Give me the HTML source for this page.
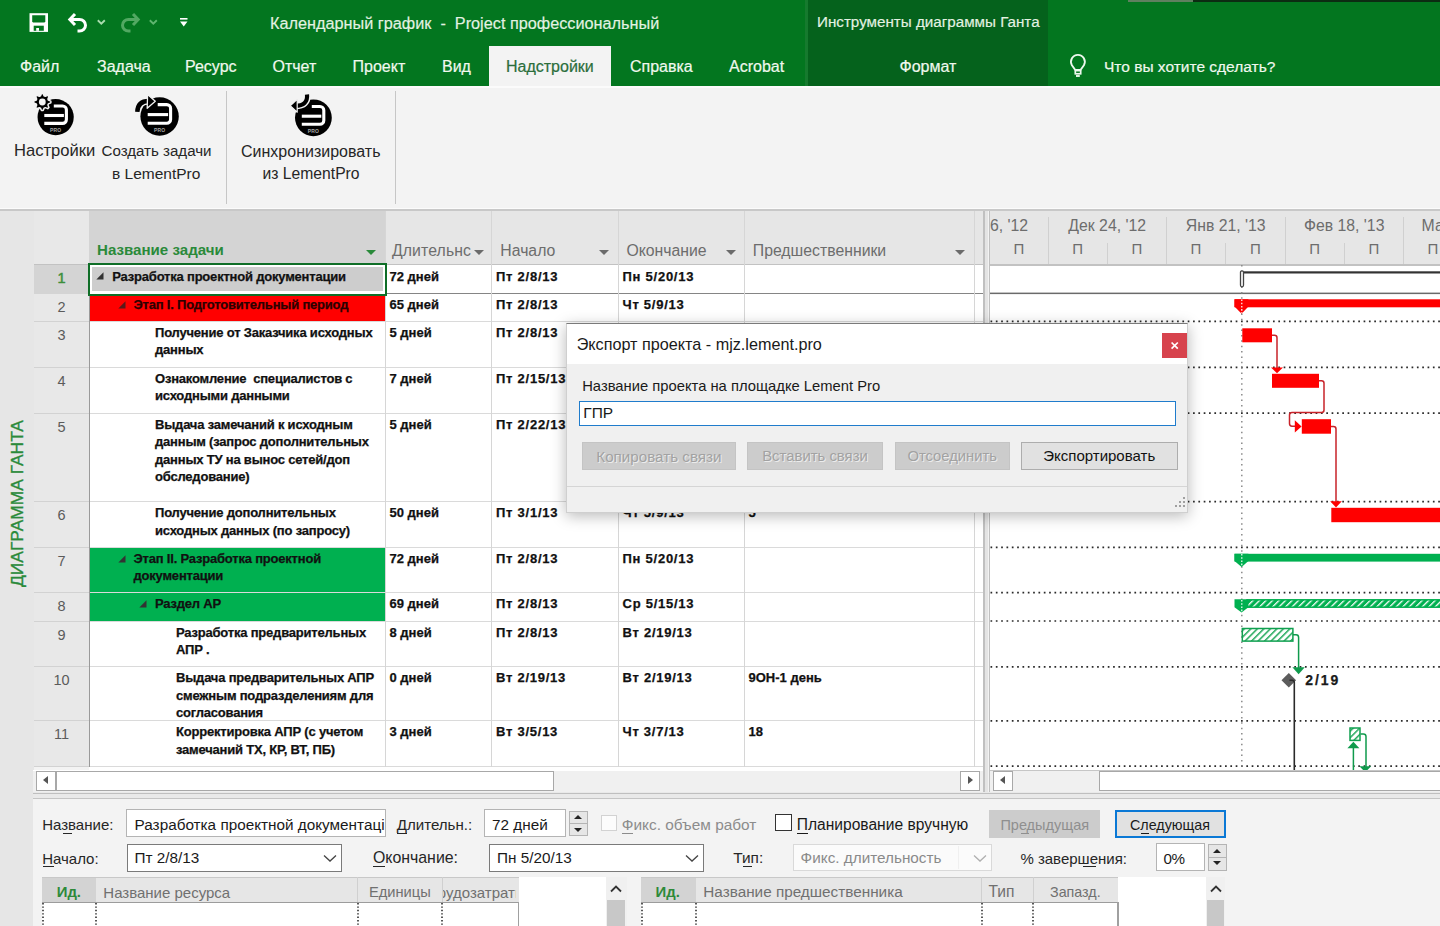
<!DOCTYPE html>
<html><head><meta charset="utf-8">
<style>
*{box-sizing:border-box;margin:0;padding:0}
html,body{width:1440px;height:926px;overflow:hidden;background:#f3f3f3;font-family:"Liberation Sans",sans-serif}
.a{position:absolute}
.t{position:absolute;line-height:1;white-space:nowrap}
/* title */
#title{left:0;top:0;width:1440px;height:85.6px;background:#03761f}
#ctx{left:807.8px;top:0;width:240px;height:85.6px;background:#05621c}
.tab{font-size:16px;color:#f0f8ee;-webkit-text-stroke:0.2px currentColor}

.nm{font-size:13px;font-weight:bold;color:#111;-webkit-text-stroke:0.25px currentColor;letter-spacing:-0.2px;line-height:17.5px;white-space:nowrap}
.du{font-size:13px;font-weight:bold;color:#111;-webkit-text-stroke:0.25px currentColor;line-height:17.5px;white-space:nowrap}
.dt{font-size:13px;font-weight:bold;color:#111;-webkit-text-stroke:0.25px currentColor;letter-spacing:0.75px;line-height:17.5px;white-space:nowrap}
.rn{font-size:14.5px;color:#5b5b5b;line-height:1;white-space:nowrap;text-align:center;width:55px}
.hd{font-size:15.8px;color:#6d6d6d;line-height:1;white-space:nowrap}
.tri{position:absolute;width:0;height:0;border-style:solid}
</style></head><body>
<!-- ===== TITLE BAR ===== -->
<div id="title" class="a"></div>
<div id="ctx" class="a"></div>
<div class="a" style="left:805px;top:0;width:2.8px;height:85.6px;background:#167a2e"></div>
<div class="a" style="left:1127.5px;top:0;width:65px;height:1.6px;background:#5f805f"></div>
<div class="a" style="left:1192.5px;top:0;width:248px;height:1.6px;background:#0c2c12"></div>
<svg class="a" style="left:0;top:0" width="200" height="40" viewBox="0 0 200 40">
 <rect x="29.5" y="13.2" width="18.5" height="18.7" fill="#fff"/>
 <path d="M32.2 15.3H45.3V21.6L44.5 22.4H33L32.2 21.6Z" fill="#03761f"/>
 <rect x="33.7" y="25.7" width="10.1" height="5.1" fill="#03761f"/>
 <rect x="36.2" y="28" width="2.8" height="2.8" fill="#fff"/>
 <g fill="none" stroke="#fff" stroke-width="3" stroke-linejoin="miter">
  <path d="M70.5 19.5H79.5A6 5.8 0 0 1 79.5 31.1H77.5"/>
  <path d="M75 14L69.8 19.5L75 25"/>
 </g>
 <path d="M97.8 20.2L101.3 23.6L104.8 20.2" fill="none" stroke="#a9dcae" stroke-width="1.9"/>
 <g fill="none" stroke="#52a862" stroke-width="3" stroke-linejoin="miter">
  <path d="M137.5 19.5H128.5A6 5.8 0 0 0 128.5 31.1H130.5"/>
  <path d="M133 14L138.2 19.5L133 25"/>
 </g>
 <path d="M149.8 20.2L153.3 23.6L156.8 20.2" fill="none" stroke="#5fb56f" stroke-width="1.9"/>
 <rect x="180" y="18" width="7.5" height="1.6" fill="#fff"/>
 <path d="M180 21.5H187.5L183.75 26.5Z" fill="#fff"/>
</svg>
<div class="t" style="left:270px;top:14.7px;font-size:16.25px;color:#e4f2e2;-webkit-text-stroke:0.15px currentColor">Календарный график&nbsp;&nbsp;-&nbsp;&nbsp;Project профессиональный</div>
<div class="t" style="left:817px;top:14.2px;font-size:15.2px;color:#e4f2e2;-webkit-text-stroke:0.15px currentColor">Инструменты диаграммы Ганта</div>
<div class="t tab" style="left:20px;top:58.7px">Файл</div>
<div class="t tab" style="left:97px;top:58.7px">Задача</div>
<div class="t tab" style="left:185px;top:58.7px">Ресурс</div>
<div class="t tab" style="left:272.5px;top:58.7px">Отчет</div>
<div class="t tab" style="left:352.5px;top:58.7px">Проект</div>
<div class="t tab" style="left:442px;top:58.7px">Вид</div>
<div class="a" style="left:489px;top:45.5px;width:122px;height:41px;background:#f3f3f3"></div>
<div class="t tab" style="left:506px;top:59px;color:#2b6e3b">Надстройки</div>
<div class="t tab" style="left:630px;top:58.7px">Справка</div>
<div class="t tab" style="left:729px;top:58.7px">Acrobat</div>
<div class="t tab" style="left:899.5px;top:58.7px">Формат</div>
<svg class="a" style="left:1060px;top:48px" width="40" height="36" viewBox="0 0 40 36">
 <path d="M15.3 22L11.9 17.2A6.9 6.9 0 1 1 23.9 17.2L20.5 22Z" fill="none" stroke="#eef8ee" stroke-width="1.9" stroke-linejoin="round"/>
 <rect x="15.3" y="22.6" width="5.4" height="3.2" fill="none" stroke="#eef8ee" stroke-width="1.7"/>
 <rect x="16" y="27" width="3.8" height="2" fill="#e0f0e0"/>
</svg>
<div class="t tab" style="left:1104px;top:58.7px;font-size:15.5px">Что вы хотите сделать?</div>

<!-- ===== RIBBON ===== -->
<div class="a" style="left:0;top:85.6px;width:1440px;height:124px;background:#f3f3f3"></div>
<div class="a" style="left:0;top:86px;width:1440px;height:2px;background:#fbfbfb"></div>
<svg class="a" style="left:30px;top:90px" width="50" height="50" viewBox="0 0 50 50">
 <circle cx="25.65" cy="27.1" r="18.1" fill="#000"/>
 <g fill="none" stroke="#fff" stroke-width="3.1">
  <path d="M23.8 15.95H32.60A3.8 3.8 0 0 1 36.4 19.75V29.60A3.8 3.8 0 0 1 32.60 33.4H14.3"/>
  <path d="M14.3 25.5H33.90"/>
 </g>
 <text x="25.65" y="42.00" text-anchor="middle" font-family="Liberation Sans" font-weight="bold" font-size="5" letter-spacing="0.2" fill="#a8a8a8">PRO</text>
 <polygon points="20.86,11.16 20.86,12.84 18.42,13.86 17.94,15.02 18.95,17.46 17.76,18.65 15.32,17.64 14.16,18.12 13.14,20.56 11.46,20.56 10.44,18.12 9.28,17.64 6.84,18.65 5.65,17.46 6.66,15.02 6.18,13.86 3.74,12.84 3.74,11.16 6.18,10.14 6.66,8.98 5.65,6.54 6.84,5.35 9.28,6.36 10.44,5.88 11.46,3.44 13.14,3.44 14.16,5.88 15.32,6.36 17.76,5.35 18.95,6.54 17.94,8.98 18.42,10.14" fill="#000" stroke="#f3f3f3" stroke-width="1.5" stroke-linejoin="round"/><circle cx="12.3" cy="12.0" r="3.4" fill="#f3f3f3"/>
</svg>
<svg class="a" style="left:135px;top:90px" width="50" height="50" viewBox="0 0 50 50">
 <circle cx="24.6" cy="26.5" r="19.2" fill="#000"/>
 <g fill="none" stroke="#fff" stroke-width="3.1">
  <path d="M22.7 14.6H31.80A3.8 3.8 0 0 1 35.6 18.40V29.40A3.8 3.8 0 0 1 31.80 33.2H12.7"/>
  <path d="M12.7 24.6H33.10"/>
 </g>
 <text x="24.6" y="41.80" text-anchor="middle" font-family="Liberation Sans" font-weight="bold" font-size="5" letter-spacing="0.2" fill="#a8a8a8">PRO</text>
 <path d="M2.3 21.8C2.6 14 7.5 10.8 14.5 11" fill="none" stroke="#f3f3f3" stroke-width="7"/><path d="M2.3 21.8C2.6 14 7.5 10.8 14.5 11" fill="none" stroke="#000" stroke-width="4.4"/><path d="M12.6 4.6L20.3 11.2L12.2 18.2Z" fill="#000" stroke="#f3f3f3" stroke-width="1.3" stroke-linejoin="round"/>
</svg>
<svg class="a" style="left:288px;top:90px" width="50" height="50" viewBox="0 0 50 50">
 <circle cx="25.4" cy="27.8" r="18.4" fill="#000"/>
 <g fill="none" stroke="#fff" stroke-width="3.1">
  <path d="M23.8 16.5H32.00A3.8 3.8 0 0 1 35.8 20.30V30.40A3.8 3.8 0 0 1 32.00 34.2H13.8"/>
  <path d="M13.8 26.2H33.30"/>
 </g>
 <text x="25.4" y="42.80" text-anchor="middle" font-family="Liberation Sans" font-weight="bold" font-size="5" letter-spacing="0.2" fill="#a8a8a8">PRO</text>
 <path d="M19 4.5C19.8 12 15.5 15.8 7.5 15.8" fill="none" stroke="#f3f3f3" stroke-width="7"/><path d="M19 4.5C19.8 12 15.5 15.8 7.5 15.8" fill="none" stroke="#000" stroke-width="4.2"/><path d="M2.2 15.8L9.2 9.2V22.2Z" fill="#000" stroke="#f3f3f3" stroke-width="1.2" stroke-linejoin="round"/>
</svg>
<div class="t" style="left:14px;top:142.8px;font-size:16.6px;color:#262626">Настройки</div>
<div class="t" style="left:101.5px;top:143px;font-size:15.1px;color:#262626">Создать задачи</div>
<div class="t" style="left:112px;top:165.5px;font-size:15.5px;color:#262626">в LementPro</div>
<div class="t" style="left:241px;top:143.8px;font-size:16px;color:#262626">Синхронизировать</div>
<div class="t" style="left:262.5px;top:166px;font-size:15.7px;color:#262626">из LementPro</div>
<div class="a" style="left:226px;top:91px;width:1px;height:113px;background:#c6c6c6"></div>
<div class="a" style="left:395px;top:91px;width:1px;height:113px;background:#c6c6c6"></div>


<div class="a" style="left:0;top:208px;width:1440px;height:1px;background:#fbfbfb"></div>
<div class="a" style="left:0;top:209px;width:1440px;height:1.5px;background:#c8c8c8"></div>
<div class="a" style="left:0;top:210.5px;width:34px;height:716px;background:#e6e6e6"></div>
<div class="t" style="left:8.5px;top:587px;font-size:17.4px;color:#2a8a3a;-webkit-text-stroke:0.35px currentColor;transform:rotate(-90deg);transform-origin:0 0">ДИАГРАММА ГАНТА</div>
<div class="a" style="left:34px;top:210.5px;width:55px;height:556px;background:#e8e8e8"></div>
<div class="a" style="left:89px;top:210.5px;width:894px;height:54px;background:#e6e6e6"></div>
<div class="a" style="left:89px;top:210.5px;width:296px;height:54px;background:#d4d4d4"></div>
<div class="a" style="left:89px;top:264.5px;width:894px;height:506px;background:#fff"></div>
<div class="a" style="left:89px;top:293.5px;width:296px;height:27.5px;background:#ff0000"></div>
<div class="a" style="left:89px;top:547.8px;width:296px;height:44.6px;background:#00b050"></div>
<div class="a" style="left:89px;top:593px;width:296px;height:28px;background:#00b050"></div>
<div class="a" style="left:89px;top:592px;width:296px;height:1px;background:#8fdcad"></div>
<div class="a" style="left:34px;top:264.5px;width:55px;height:29px;background:#d4d4d4"></div>
<div class="a" style="left:89px;top:264.5px;width:296px;height:29px;background:#fff"></div>
<div class="a" style="left:91.6px;top:267px;width:291.8px;height:24.4px;background:#cdcdcd"></div>
<div class="a" style="left:387px;top:292.8px;width:596px;height:1.6px;background:#858585"></div>
<div class="a" style="left:34px;top:320.8px;width:55px;height:1px;background:#d2d2d2"></div>
<div class="a" style="left:89px;top:320.8px;width:894px;height:1px;background:#dadada"></div>
<div class="a" style="left:34px;top:366.8px;width:55px;height:1px;background:#d2d2d2"></div>
<div class="a" style="left:89px;top:366.8px;width:894px;height:1px;background:#dadada"></div>
<div class="a" style="left:34px;top:412.7px;width:55px;height:1px;background:#d2d2d2"></div>
<div class="a" style="left:89px;top:412.7px;width:894px;height:1px;background:#dadada"></div>
<div class="a" style="left:34px;top:501.0px;width:55px;height:1px;background:#d2d2d2"></div>
<div class="a" style="left:89px;top:501.0px;width:894px;height:1px;background:#dadada"></div>
<div class="a" style="left:34px;top:546.9px;width:55px;height:1px;background:#d2d2d2"></div>
<div class="a" style="left:89px;top:546.9px;width:894px;height:1px;background:#dadada"></div>
<div class="a" style="left:34px;top:592.1px;width:55px;height:1px;background:#d2d2d2"></div>
<div class="a" style="left:89px;top:592.1px;width:894px;height:1px;background:#dadada"></div>
<div class="a" style="left:34px;top:620.7px;width:55px;height:1px;background:#d2d2d2"></div>
<div class="a" style="left:89px;top:620.7px;width:894px;height:1px;background:#dadada"></div>
<div class="a" style="left:34px;top:666.3px;width:55px;height:1px;background:#d2d2d2"></div>
<div class="a" style="left:89px;top:666.3px;width:894px;height:1px;background:#dadada"></div>
<div class="a" style="left:34px;top:720.3px;width:55px;height:1px;background:#d2d2d2"></div>
<div class="a" style="left:89px;top:720.3px;width:894px;height:1px;background:#dadada"></div>
<div class="a" style="left:34px;top:765.7px;width:55px;height:1px;background:#d2d2d2"></div>
<div class="a" style="left:89px;top:765.7px;width:894px;height:1px;background:#dadada"></div>
<div class="a" style="left:34px;top:264px;width:949px;height:1px;background:#c2c2c2"></div>
<div class="a" style="left:385.0px;top:210.5px;width:1px;height:556px;background:#d6d6d6"></div>
<div class="a" style="left:491.0px;top:210.5px;width:1px;height:556px;background:#d6d6d6"></div>
<div class="a" style="left:618.0px;top:210.5px;width:1px;height:556px;background:#d6d6d6"></div>
<div class="a" style="left:744.0px;top:210.5px;width:1px;height:556px;background:#d6d6d6"></div>
<div class="a" style="left:974.0px;top:210.5px;width:1px;height:556px;background:#d6d6d6"></div>
<div class="a" style="left:88.5px;top:264.5px;width:1.5px;height:502px;background:#9a9a9a"></div>
<div class="a" style="left:88px;top:263.4px;width:299px;height:32.2px;background:transparent;border:2.6px solid #0f6e27"></div>
<div class="a" style="left:91.6px;top:267px;width:291.8px;height:24.4px;background:#cdcdcd"></div>
<div class="t" style="left:97px;top:242.2px;font-size:15.1px;font-weight:bold;color:#2a8a3a">Название задачи</div>
<div class="t hd" style="left:392px;top:242.5px;letter-spacing:0.1px">Длительнс</div>
<div class="t hd" style="left:500.3px;top:242.5px">Начало</div>
<div class="t hd" style="left:626.4px;top:242.5px">Окончание</div>
<div class="t hd" style="left:752.8px;top:242.5px">Предшественники</div>
<div class="tri" style="left:366px;top:249.5px;border-width:5.5px 5px 0 5px;border-color:#2a8a3a transparent transparent transparent"></div>
<div class="tri" style="left:474px;top:249.5px;border-width:5.5px 5px 0 5px;border-color:#6b6b6b transparent transparent transparent"></div>
<div class="tri" style="left:599px;top:249.5px;border-width:5.5px 5px 0 5px;border-color:#6b6b6b transparent transparent transparent"></div>
<div class="tri" style="left:726px;top:249.5px;border-width:5.5px 5px 0 5px;border-color:#6b6b6b transparent transparent transparent"></div>
<div class="tri" style="left:955px;top:249.5px;border-width:5.5px 5px 0 5px;border-color:#6b6b6b transparent transparent transparent"></div>
<div class="t rn" style="left:34px;top:270.8px;color:#3c8f3c;-webkit-text-stroke:0.5px currentColor">1</div>
<div class="t rn" style="left:34px;top:299.6px;color:#5b5b5b">2</div>
<div class="t rn" style="left:34px;top:327.6px;color:#5b5b5b">3</div>
<div class="t rn" style="left:34px;top:373.6px;color:#5b5b5b">4</div>
<div class="t rn" style="left:34px;top:419.5px;color:#5b5b5b">5</div>
<div class="t rn" style="left:34px;top:507.8px;color:#5b5b5b">6</div>
<div class="t rn" style="left:34px;top:553.6999999999999px;color:#5b5b5b">7</div>
<div class="t rn" style="left:34px;top:598.9px;color:#5b5b5b">8</div>
<div class="t rn" style="left:34px;top:627.5px;color:#5b5b5b">9</div>
<div class="t rn" style="left:34px;top:673.0999999999999px;color:#5b5b5b">10</div>
<div class="t rn" style="left:34px;top:727.0999999999999px;color:#5b5b5b">11</div>
<div class="t nm" style="left:112.3px;top:267.9px;color:#111">Разработка проектной документации</div>
<svg class="a" style="left:96.3px;top:272.0px" width="8" height="8" viewBox="0 0 8 8"><path d="M0.3 7.5L7.5 0.3V7.5Z" fill="#333"/></svg>
<div class="t du" style="left:389.5px;top:267.9px">72 дней</div>
<div class="t dt" style="left:496px;top:267.9px">Пт 2/8/13</div>
<div class="t dt" style="left:622.5px;top:267.9px">Пн 5/20/13</div>
<div class="t nm" style="left:133.5px;top:295.8px;color:#2c0000">Этап I. Подготовительный период</div>
<svg class="a" style="left:117.5px;top:300.8px" width="8" height="8" viewBox="0 0 8 8"><path d="M0.3 7.5L7.5 0.3V7.5Z" fill="#5a1a1a"/></svg>
<div class="t du" style="left:389.5px;top:295.8px">65 дней</div>
<div class="t dt" style="left:496px;top:295.8px">Пт 2/8/13</div>
<div class="t dt" style="left:622.5px;top:295.8px">Чт 5/9/13</div>
<div class="t nm" style="left:155px;top:323.8px;color:#111">Получение от Заказчика исходных<br>данных</div>
<div class="t du" style="left:389.5px;top:323.8px">5 дней</div>
<div class="t dt" style="left:496px;top:323.8px">Пт 2/8/13</div>
<div class="t nm" style="left:155px;top:369.8px;color:#111">Ознакомление&nbsp; специалистов с<br>исходными данными</div>
<div class="t du" style="left:389.5px;top:369.8px">7 дней</div>
<div class="t dt" style="left:496px;top:369.8px">Пт 2/15/13</div>
<div class="t nm" style="left:155px;top:415.7px;color:#111">Выдача замечаний к исходным<br>данным (запрос дополнительных<br>данных ТУ на вынос сетей/доп<br>обследование)</div>
<div class="t du" style="left:389.5px;top:415.7px">5 дней</div>
<div class="t dt" style="left:496px;top:415.7px">Пт 2/22/13</div>
<div class="t nm" style="left:155px;top:504.0px;color:#111">Получение дополнительных<br>исходных данных (по запросу)</div>
<div class="t du" style="left:389.5px;top:504.0px">50 дней</div>
<div class="t dt" style="left:496px;top:504.0px">Пт 3/1/13</div>
<div class="t dt" style="left:622.5px;top:504.0px">Чт 5/9/13</div>
<div class="t du" style="left:748.5px;top:504.0px">5</div>
<div class="t nm" style="left:133.5px;top:549.9px;color:#111">Этап II. Разработка проектной<br>документации</div>
<svg class="a" style="left:117.5px;top:554.9px" width="8" height="8" viewBox="0 0 8 8"><path d="M0.3 7.5L7.5 0.3V7.5Z" fill="#333"/></svg>
<div class="t du" style="left:389.5px;top:549.9px">72 дней</div>
<div class="t dt" style="left:496px;top:549.9px">Пт 2/8/13</div>
<div class="t dt" style="left:622.5px;top:549.9px">Пн 5/20/13</div>
<div class="t nm" style="left:155px;top:595.1px;color:#111">Раздел АР</div>
<svg class="a" style="left:139px;top:600.1px" width="8" height="8" viewBox="0 0 8 8"><path d="M0.3 7.5L7.5 0.3V7.5Z" fill="#333"/></svg>
<div class="t du" style="left:389.5px;top:595.1px">69 дней</div>
<div class="t dt" style="left:496px;top:595.1px">Пт 2/8/13</div>
<div class="t dt" style="left:622.5px;top:595.1px">Ср 5/15/13</div>
<div class="t nm" style="left:176px;top:623.7px;color:#111">Разработка предварительных<br>АПР .</div>
<div class="t du" style="left:389.5px;top:623.7px">8 дней</div>
<div class="t dt" style="left:496px;top:623.7px">Пт 2/8/13</div>
<div class="t dt" style="left:622.5px;top:623.7px">Вт 2/19/13</div>
<div class="t nm" style="left:176px;top:669.3px;color:#111">Выдача предварительных АПР<br>смежным подразделениям для<br>согласования</div>
<div class="t du" style="left:389.5px;top:669.3px">0 дней</div>
<div class="t dt" style="left:496px;top:669.3px">Вт 2/19/13</div>
<div class="t dt" style="left:622.5px;top:669.3px">Вт 2/19/13</div>
<div class="t du" style="left:748.5px;top:669.3px">9ОН-1 день</div>
<div class="t nm" style="left:176px;top:723.3px;color:#111">Корректировка АПР (с учетом<br>замечаний ТХ, КР, ВТ, ПБ)</div>
<div class="t du" style="left:389.5px;top:723.3px">3 дней</div>
<div class="t dt" style="left:496px;top:723.3px">Вт 3/5/13</div>
<div class="t dt" style="left:622.5px;top:723.3px">Чт 3/7/13</div>
<div class="t du" style="left:748.5px;top:723.3px">18</div>
<div class="a" style="left:983px;top:210.5px;width:1.6px;height:581px;background:#c0c0c0"></div>
<div class="a" style="left:988.5px;top:210.5px;width:1.6px;height:581px;background:#c0c0c0"></div>
<div class="a" style="left:984.6px;top:210.5px;width:3.9px;height:581px;background:#e4e4e4"></div>
<div class="a" style="left:990px;top:210.5px;width:450px;height:54px;background:#e6e6e6"></div>
<div class="a" style="left:990px;top:264.5px;width:450px;height:506.5px;background:#fff"></div>
<div class="a" style="left:1047.5px;top:217px;width:1px;height:47.5px;background:#d0d0d0"></div>
<div class="a" style="left:1166.0px;top:217px;width:1px;height:47.5px;background:#d0d0d0"></div>
<div class="a" style="left:1284.5px;top:217px;width:1px;height:47.5px;background:#d0d0d0"></div>
<div class="a" style="left:1403.0px;top:217px;width:1px;height:47.5px;background:#d0d0d0"></div>
<div class="a" style="left:1106.7px;top:243px;width:1px;height:21.5px;background:#d0d0d0"></div>
<div class="a" style="left:1225.2px;top:243px;width:1px;height:21.5px;background:#d0d0d0"></div>
<div class="a" style="left:1343.7px;top:243px;width:1px;height:21.5px;background:#d0d0d0"></div>
<div class="a" style="left:990px;top:210.5px;width:450px;height:54px;overflow:hidden">
<div class="t" style="left:-62px;top:7px;width:120px;text-align:center;font-size:15.8px;color:#6d6d6d">Ноя 26, '12</div>
<div class="t" style="left:57.200000000000045px;top:7px;width:120px;text-align:center;font-size:15.8px;color:#6d6d6d">Дек 24, '12</div>
<div class="t" style="left:175.70000000000005px;top:7px;width:120px;text-align:center;font-size:15.8px;color:#6d6d6d">Янв 21, '13</div>
<div class="t" style="left:294.20000000000005px;top:7px;width:120px;text-align:center;font-size:15.8px;color:#6d6d6d">Фев 18, '13</div>
<div class="t" style="left:412.70000000000005px;top:7px;width:120px;text-align:center;font-size:15.8px;color:#6d6d6d">Мар 18, '13</div>
<div class="t" style="left:19px;top:30px;width:20px;text-align:center;font-size:15px;color:#6d6d6d">П</div>
<div class="t" style="left:77.59999999999991px;top:30px;width:20px;text-align:center;font-size:15px;color:#6d6d6d">П</div>
<div class="t" style="left:137px;top:30px;width:20px;text-align:center;font-size:15px;color:#6d6d6d">П</div>
<div class="t" style="left:196px;top:30px;width:20px;text-align:center;font-size:15px;color:#6d6d6d">П</div>
<div class="t" style="left:255.5px;top:30px;width:20px;text-align:center;font-size:15px;color:#6d6d6d">П</div>
<div class="t" style="left:314.5999999999999px;top:30px;width:20px;text-align:center;font-size:15px;color:#6d6d6d">П</div>
<div class="t" style="left:373.79999999999995px;top:30px;width:20px;text-align:center;font-size:15px;color:#6d6d6d">П</div>
<div class="t" style="left:433px;top:30px;width:20px;text-align:center;font-size:15px;color:#6d6d6d">П</div>
</div>
<div class="a" style="left:990px;top:264px;width:450px;height:1.5px;background:#c2c2c2"></div>
<svg class="a" style="left:990px;top:264px" width="450" height="507" viewBox="0 0 450 507">
<defs><pattern id="hg" patternUnits="userSpaceOnUse" width="4.6" height="4.6" patternTransform="rotate(45)"><rect width="4.6" height="4.6" fill="#fff"/><rect width="1.5" height="4.6" fill="#20a85a"/></pattern><pattern id="hs" patternUnits="userSpaceOnUse" width="4.6" height="4.6" patternTransform="rotate(45)"><rect width="4.6" height="4.6" fill="#00b050"/><rect width="1.3" height="4.6" fill="#fff"/></pattern></defs>
<rect x="0" y="28.6" width="450" height="1.5" fill="#6a6a6a"/>
<line x1="0.5" y1="57.3" x2="450" y2="57.3" stroke="#2a2a2a" stroke-width="1.7" stroke-dasharray="1.7 3.63"/>
<line x1="0.5" y1="103.3" x2="450" y2="103.3" stroke="#2a2a2a" stroke-width="1.7" stroke-dasharray="1.7 3.63"/>
<line x1="0.5" y1="149.2" x2="450" y2="149.2" stroke="#2a2a2a" stroke-width="1.7" stroke-dasharray="1.7 3.63"/>
<line x1="0.5" y1="237.6" x2="450" y2="237.6" stroke="#2a2a2a" stroke-width="1.7" stroke-dasharray="1.7 3.63"/>
<line x1="0.5" y1="283.3" x2="450" y2="283.3" stroke="#2a2a2a" stroke-width="1.7" stroke-dasharray="1.7 3.63"/>
<line x1="0.5" y1="328.7" x2="450" y2="328.7" stroke="#2a2a2a" stroke-width="1.7" stroke-dasharray="1.7 3.63"/>
<line x1="0.5" y1="357.0" x2="450" y2="357.0" stroke="#2a2a2a" stroke-width="1.7" stroke-dasharray="1.7 3.63"/>
<line x1="0.5" y1="402.9" x2="450" y2="402.9" stroke="#2a2a2a" stroke-width="1.7" stroke-dasharray="1.7 3.63"/>
<line x1="0.5" y1="456.8" x2="450" y2="456.8" stroke="#2a2a2a" stroke-width="1.7" stroke-dasharray="1.7 3.63"/>
<line x1="0.5" y1="502.2" x2="450" y2="502.2" stroke="#2a2a2a" stroke-width="1.7" stroke-dasharray="1.7 3.63"/>
<line x1="251.8" y1="1" x2="251.8" y2="506" stroke="#8a8a8a" stroke-width="1.5" stroke-dasharray="1.5 3.88"/>
<rect x="253" y="7.3" width="210" height="2.2" fill="#333"/>
<rect x="250.5" y="6.8" width="3" height="16" rx="1.5" fill="#fff" stroke="#444" stroke-width="1.3"/>
<rect x="244.5" y="35.3" width="220" height="8" fill="#ff0000"/>
<path d="M244.5 35.3H258.4V42.6L251.6 49.8L244.5 42.6Z" fill="#ff0000"/>
<line x1="251.8" y1="35.5" x2="251.8" y2="49" stroke="#fff" stroke-width="1.2" stroke-dasharray="1.6 1.6"/>
<rect x="252.3" y="64.3" width="29.7" height="14" fill="#ff0000"/>
<rect x="282" y="109.8" width="47" height="14" fill="#ff0000"/>
<rect x="311.8" y="155.2" width="29.2" height="14.5" fill="#ff0000"/>
<rect x="341.3" y="243.8" width="120" height="14.4" fill="#ff0000"/>
<path d="M282 71.3H284.5Q287 71.3 287 73.8V104" fill="none" stroke="#c8232a" stroke-width="1.5"/>
<path d="M281 103.4 L293 103.4 L287 109.2Z" fill="#ff0000"/>
<path d="M329 116.8H331.5Q334 116.8 334 119.3V146.1Q334 148.6 331.5 148.6H302Q299.5 148.6 299.5 151.1V159.5Q299.5 162.2 302 162.2H306" fill="none" stroke="#c8232a" stroke-width="1.5"/>
<path d="M304.8 156.2 L304.8 168.6 L311.6 162.4Z" fill="#ff0000"/>
<path d="M341 162.4H343.5Q346 162.4 346 164.9V238" fill="none" stroke="#c8232a" stroke-width="1.5"/>
<path d="M340.2 237.2 L351.8 237.2 L346 243.6Z" fill="#ff0000"/>
<rect x="244.5" y="289.8" width="220" height="7.8" fill="#00b050"/>
<path d="M244.5 289.8H258.4V297L251.6 303L244.5 297Z" fill="#00b050"/>
<line x1="251.8" y1="290" x2="251.8" y2="302" stroke="#fff" stroke-width="1.2" stroke-dasharray="1.6 1.6"/>
<rect x="257" y="335.8" width="210" height="7.4" fill="url(#hs)" stroke="#00b050" stroke-width="1.5"/>
<path d="M244.5 335.3H258.4V343.2L251.6 348.6L244.5 343.2Z" fill="#00b050"/>
<line x1="251.8" y1="336" x2="251.8" y2="348" stroke="#fff" stroke-width="1.2" stroke-dasharray="1.6 1.6"/>
<rect x="252.3" y="364.5" width="50.6" height="12.6" fill="url(#hg)" stroke="#10a050" stroke-width="1.5"/>
<path d="M303 370.8H306Q308.6 370.8 308.6 373.4V404" fill="none" stroke="#0f9a4c" stroke-width="1.5"/>
<path d="M302.4 403.2 L314.8 403.2 L308.6 410.2Z" fill="#0f9a4c"/>
<path d="M298.8 409L306.1 416.3L298.8 423.6L291.5 416.3Z" fill="#5c5c5c"/>
<path d="M299.5 416.3H302Q304.3 416.3 304.3 418.6V506" fill="none" stroke="#2a2a2a" stroke-width="1.6"/>
<text x="315.3" y="420.5" font-family="Liberation Sans" font-weight="bold" font-size="14" letter-spacing="1.9" fill="#1a1a1a" stroke="#1a1a1a" stroke-width="0.25">2/19</text>
<rect x="360" y="464" width="10" height="12.4" fill="url(#hg)" stroke="#10a050" stroke-width="1.5"/>
<path d="M363.4 506V483" fill="none" stroke="#0f9a4c" stroke-width="1.5"/>
<path d="M357.4 484.3 L369.4 484.3 L363.4 477.8Z" fill="#0f9a4c"/>
<path d="M370.5 470H373.4Q376 470 376 472.6V503" fill="none" stroke="#0f9a4c" stroke-width="1.5"/>
<path d="M369.4 502.2 L381.2 502.2 L375.3 508.2Z" fill="#0f9a4c"/>
</svg>
<div class="a" style="left:565.6px;top:322.6px;width:622.9px;height:190.39999999999998px;background:#f0f0f0;border:1px solid #cfcfcf;border-top-color:#7a7a7a;box-shadow:0 3px 14px rgba(0,0,0,0.28)"></div>
<div class="a" style="left:566.6px;top:323.6px;width:620.9px;height:40.39999999999998px;background:#fff"></div>
<div class="t" style="left:576.7px;top:335.6867px;font-size:16.2px;color:#1a1a1a">Экспорт проекта - mjz.lement.pro</div>
<div class="a" style="left:1161.7px;top:333.3px;width:25.4px;height:25.2px;background:#d7434d"></div>
<svg class="a" style="left:1161.7px;top:333.3px" width="25.4" height="25.2" viewBox="0 0 25.4 25.2"><path d="M9.6 9.5L15.8 15.7M15.8 9.5L9.6 15.7" stroke="#fff" stroke-width="1.7"/></svg>
<div class="t" style="left:582.2px;top:379.19719499999997px;font-size:14.77px;color:#1a1a1a">Название проекта на площадке Lement Pro</div>
<div class="a" style="left:578.9px;top:400.6px;width:597.5px;height:25.5px;background:#fff;border:1.6px solid #1f7ccc"></div>
<div class="t" style="left:583.3px;top:405.17925px;font-size:15.5px;color:#1a1a1a">ГПР</div>
<div class="a" style="left:581.8px;top:442.1px;width:154.20000000000005px;height:27.8px;background:#cccccc;border:1px solid #c4c4c4"></div>
<div class="t" style="left:581.8px;width:154.20000000000005px;text-align:center;top:448.6332px;font-size:15.2px;color:#a2a2a2;text-shadow:1px 1px 0 #ececec">Копировать связи</div>
<div class="a" style="left:746.7px;top:442.1px;width:136.5999999999999px;height:27.8px;background:#cccccc;border:1px solid #c4c4c4"></div>
<div class="t" style="left:746.7px;width:136.5999999999999px;text-align:center;top:448.88715px;font-size:14.9px;color:#a2a2a2;text-shadow:1px 1px 0 #ececec">Вставить связи</div>
<div class="a" style="left:894.7px;top:442.1px;width:115.09999999999991px;height:27.8px;background:#cccccc;border:1px solid #c4c4c4"></div>
<div class="t" style="left:894.7px;width:115.09999999999991px;text-align:center;top:448.9718px;font-size:14.8px;color:#a2a2a2;text-shadow:1px 1px 0 #ececec">Отсоединить</div>
<div class="a" style="left:1020.8px;top:442.1px;width:156.9000000000001px;height:27.8px;background:#e1e1e1;border:1px solid #adadad"></div>
<div class="t" style="left:1020.8px;width:156.9000000000001px;text-align:center;top:448.1025px;font-size:15px;color:#111">Экспортировать</div>
<div class="a" style="left:566.6px;top:486px;width:620.9px;height:1px;background:#d5d5d5"></div>
<div class="a" style="left:1182.5px;top:497px;width:2px;height:2px;background:#a0a0a0"></div>
<div class="a" style="left:1178.5px;top:501px;width:2px;height:2px;background:#a0a0a0"></div>
<div class="a" style="left:1182.5px;top:501px;width:2px;height:2px;background:#a0a0a0"></div>
<div class="a" style="left:1174.5px;top:505px;width:2px;height:2px;background:#a0a0a0"></div>
<div class="a" style="left:1178.5px;top:505px;width:2px;height:2px;background:#a0a0a0"></div>
<div class="a" style="left:1182.5px;top:505px;width:2px;height:2px;background:#a0a0a0"></div>
<div class="a" style="left:33px;top:770px;width:950px;height:22px;background:#f0f0f0"></div>
<div class="a" style="left:33px;top:770px;width:950px;height:1px;background:#fff"></div>
<div class="a" style="left:36.3px;top:771.1px;width:19.5px;height:19.5px;background:#fff;border:1.5px solid #a8a8a8"></div>
<div class="tri" style="left:43px;top:776.3px;border-width:4.9px 5.5px 4.9px 0;border-color:transparent #555 transparent transparent"></div>
<div class="a" style="left:55.8px;top:771.1px;width:498.7px;height:19.5px;background:#fff;border:1.5px solid #a8a8a8"></div>
<div class="a" style="left:960.3px;top:771.1px;width:20.2px;height:19.5px;background:#fff;border:1.5px solid #a8a8a8"></div>
<div class="tri" style="left:968px;top:776.3px;border-width:4.9px 0 4.9px 5.5px;border-color:transparent transparent transparent #555"></div>
<div class="a" style="left:990px;top:771px;width:450px;height:21px;background:#f0f0f0"></div>
<div class="a" style="left:992.8px;top:771.1px;width:20px;height:19.5px;background:#fff;border:1.5px solid #a8a8a8"></div>
<div class="tri" style="left:999.5px;top:776.3px;border-width:4.9px 5.5px 4.9px 0;border-color:transparent #555 transparent transparent"></div>
<div class="a" style="left:1099px;top:771.1px;width:345px;height:19.5px;background:#fff;border:1.5px solid #a8a8a8"></div>
<div class="a" style="left:990px;top:770px;width:450px;height:1.2px;background:#c6c6c6"></div>
<div class="a" style="left:33px;top:792px;width:1407px;height:7px;background:#e9e9e9"></div>
<div class="a" style="left:33px;top:792.6px;width:1407px;height:1.5px;background:#bfbfbf"></div>
<div class="a" style="left:33px;top:797.8px;width:1407px;height:1.5px;background:#c4c4c4"></div>
<div class="a" style="left:33px;top:799.3px;width:1407px;height:127px;background:#f3f3f3"></div>
<div class="t" style="left:42.2px;top:817.30px;font-size:15px;color:#262626;">Название:</div>
<div class="a" style="left:62.5px;top:832.5px;width:9.0px;height:1px;background:#262626"></div>
<div class="a" style="left:125.6px;top:809.3px;width:260px;height:28px;background:#fff;border:1px solid #b4b4b4;overflow:hidden"><div class="t" style="left:8px;top:7.1px;font-size:15.3px;color:#1a1a1a">Разработка проектной документаці</div></div>
<div class="t" style="left:396.7px;top:817.22px;font-size:15.1px;color:#262626;">Длительн.:</div>
<div class="a" style="left:397px;top:832.5px;width:10px;height:1px;background:#262626"></div>
<div class="a" style="left:484px;top:809.3px;width:82.2px;height:28px;background:#fff;border:1px solid #b4b4b4"></div>
<div class="t" style="left:492px;top:816.55px;font-size:15.3px;color:#1a1a1a;">72 дней</div>
<div class="a" style="left:568.9px;top:810.7px;width:18.9px;height:25.3px;background:#e6e6e6;border:1px solid #b4b4b4"></div>
<div class="a" style="left:569.9px;top:823px;width:16.9px;height:1px;background:#b4b4b4"></div>
<div class="tri" style="left:574.3px;top:815.2px;border-width:0 4.2px 4.6px 4.2px;border-color:transparent transparent #222 transparent"></div>
<div class="tri" style="left:574.3px;top:827.6px;border-width:4.6px 4.2px 0 4.2px;border-color:#222 transparent transparent transparent"></div>
<div class="a" style="left:601px;top:815px;width:15.7px;height:15.7px;background:#fcfcfc;border:1px solid #d2d2d2"></div>
<div class="t" style="left:621.8px;top:816.96px;font-size:15.4px;color:#8c8c8c;">Фикс. объем работ</div>
<div class="a" style="left:622px;top:832.5px;width:11px;height:1px;background:#8c8c8c"></div>
<div class="a" style="left:775px;top:814.4px;width:17.2px;height:16.7px;background:#fff;border:1.4px solid #333"></div>
<div class="t" style="left:796.7px;top:816.79px;font-size:15.6px;color:#1a1a1a;">Планирование вручную</div>
<div class="a" style="left:797px;top:832.5px;width:11px;height:1px;background:#1a1a1a"></div>
<div class="a" style="left:988.5px;top:810px;width:111.7px;height:28.3px;background:#cccccc"></div>
<div class="t" style="left:1000.4px;top:818.23px;font-size:14.5px;color:#8f8f8f;">Предыдущая</div>
<div class="a" style="left:1020.5px;top:833px;width:8.5px;height:1px;background:#8f8f8f"></div>
<div class="a" style="left:1114.9px;top:810px;width:111.4px;height:28.3px;background:#e1e1e1;border:2px solid #0a78d5"></div>
<div class="t" style="left:1130px;top:818.40px;font-size:14.3px;color:#1a1a1a;">Следующая</div>
<div class="a" style="left:1140.5px;top:833px;width:8.5px;height:1px;background:#1a1a1a"></div>
<div class="t" style="left:42.2px;top:850.80px;font-size:15px;color:#262626;">Начало:</div>
<div class="a" style="left:42.5px;top:866px;width:11.0px;height:1px;background:#262626"></div>
<div class="a" style="left:126.7px;top:844px;width:215.5px;height:27.600000000000023px;background:#fff;border:1px solid #7a7a7a"></div>
<div class="t" style="left:134.4px;top:850.35px;font-size:15.3px;color:#1a1a1a;">Пт 2/8/13</div>
<svg class="a" style="left:323.2px;top:853px" width="14" height="10" viewBox="0 0 14 10"><path d="M1 2.5L7 8L13 2.5" fill="none" stroke="#444" stroke-width="1.3"/></svg>
<div class="t" style="left:372.9px;top:850.04px;font-size:15.9px;color:#262626;">Окончание:</div>
<div class="a" style="left:373px;top:866px;width:12px;height:1px;background:#262626"></div>
<div class="a" style="left:489.3px;top:844px;width:215.09999999999997px;height:27.600000000000023px;background:#fff;border:1px solid #7a7a7a"></div>
<div class="t" style="left:497.0px;top:850.35px;font-size:15.3px;color:#1a1a1a;">Пн 5/20/13</div>
<svg class="a" style="left:685.4px;top:853px" width="14" height="10" viewBox="0 0 14 10"><path d="M1 2.5L7 8L13 2.5" fill="none" stroke="#444" stroke-width="1.3"/></svg>
<div class="t" style="left:733.3px;top:850.46px;font-size:15.4px;color:#262626;">Тип:</div>
<div class="a" style="left:743px;top:866px;width:9px;height:1px;background:#262626"></div>
<div class="a" style="left:792.9px;top:844.4px;width:198.70000000000005px;height:26.700000000000045px;background:#fbfbfb;border:1px solid #d9d9d9"></div>
<div class="t" style="left:800.6px;top:850.35px;font-size:15.3px;color:#8a8a8a;">Фикс. длительность</div>
<svg class="a" style="left:972.6px;top:853px" width="14" height="10" viewBox="0 0 14 10"><path d="M1 2.5L7 8L13 2.5" fill="none" stroke="#b0b0b0" stroke-width="1.3"/></svg>
<div class="a" style="left:958px;top:846px;width:1px;height:23px;background:#f0f0f0"></div>
<div class="t" style="left:1020.4px;top:851.10px;font-size:15px;color:#262626;">% завершения:</div>
<div class="a" style="left:1083px;top:866.3px;width:13px;height:1px;background:#262626"></div>
<div class="a" style="left:1155.5px;top:843.2px;width:49.8px;height:28.1px;background:#fff;border:1px solid #b4b4b4"></div>
<div class="t" style="left:1163.5px;top:850.63px;font-size:15.2px;color:#1a1a1a;letter-spacing:-0.5px">0%</div>
<div class="a" style="left:1208px;top:844px;width:19px;height:26.5px;background:#e6e6e6;border:1px solid #b4b4b4"></div>
<div class="a" style="left:1209px;top:857px;width:17px;height:1px;background:#b4b4b4"></div>
<div class="tri" style="left:1213.4px;top:848.5px;border-width:0 4.2px 4.6px 4.2px;border-color:transparent transparent #222 transparent"></div>
<div class="tri" style="left:1213.4px;top:861px;border-width:4.6px 4.2px 0 4.2px;border-color:#222 transparent transparent transparent"></div>
<div class="a" style="left:42.2px;top:876.7px;width:200px;height:50px;overflow:hidden"></div>
<div class="a" style="left:42.2px;top:876.7px;width:476.7px;height:25.5px;background:#e6e6e6;border-top:1px solid #c8c8c8"></div>
<div class="a" style="left:42.2px;top:876.7px;width:54px;height:25.5px;background:#d3d3d3;border-top:1px solid #c8c8c8"></div>
<div class="a" style="left:42.2px;top:901.6px;width:476.7px;height:1.5px;background:#9c9c9c"></div>
<div class="a" style="left:42.2px;top:903px;width:476.7px;height:23px;background:#fff"></div>
<div class="a" style="left:518.9px;top:876.7px;width:86.70000000000005px;height:50px;background:#fff"></div>
<div class="a" style="left:517.9px;top:902px;width:1.3px;height:24px;background:#a0a0a0"></div>
<div class="a" style="left:357.3px;top:877px;width:1px;height:25px;background:#d0d0d0"></div>
<div class="a" style="left:441.7px;top:877px;width:1px;height:25px;background:#d0d0d0"></div>
<svg class="a" style="left:42.0px;top:903px" width="2" height="23"><line x1="1" y1="0" x2="1" y2="23" stroke="#111" stroke-width="1.4" stroke-dasharray="1.4 2"/></svg>
<svg class="a" style="left:95.2px;top:903px" width="2" height="23"><line x1="1" y1="0" x2="1" y2="23" stroke="#111" stroke-width="1.4" stroke-dasharray="1.4 2"/></svg>
<svg class="a" style="left:356.8px;top:903px" width="2" height="23"><line x1="1" y1="0" x2="1" y2="23" stroke="#111" stroke-width="1.4" stroke-dasharray="1.4 2"/></svg>
<svg class="a" style="left:441.2px;top:903px" width="2" height="23"><line x1="1" y1="0" x2="1" y2="23" stroke="#111" stroke-width="1.4" stroke-dasharray="1.4 2"/></svg>
<div class="t" style="left:56.7px;top:884.69px;font-size:14.9px;color:#2e8a3a;font-weight:bold">Ид.</div>
<div class="t" style="left:103.3px;top:884.60px;font-size:15px;color:#707070;">Название ресурса</div>
<div class="t" style="left:368.9px;top:884.86px;font-size:14.7px;color:#707070;">Единицы</div>
<div class="a" style="left:605.6px;top:876.7px;width:21.100000000000023px;height:50px;background:#f0f0f0"></div>
<div class="a" style="left:607.1px;top:900px;width:18.100000000000023px;height:27px;background:#c8c8c8"></div>
<svg class="a" style="left:609.1500000000001px;top:884px" width="14" height="10" viewBox="0 0 14 10"><path d="M2 7.5L7 2.5L12 7.5" fill="none" stroke="#333" stroke-width="1.8"/></svg>
<div class="a" style="left:443px;top:878px;width:73px;height:23px;overflow:hidden"><div class="t" style="left:-13.5px;top:6.6px;font-size:15px;color:#707070">Трудозатраты</div></div>
<div class="a" style="left:641px;top:876.7px;width:477.4000000000001px;height:25.5px;background:#e6e6e6;border-top:1px solid #c8c8c8"></div>
<div class="a" style="left:641px;top:876.7px;width:54.6px;height:25.5px;background:#d3d3d3;border-top:1px solid #c8c8c8"></div>
<div class="a" style="left:641px;top:901.6px;width:477.4000000000001px;height:1.5px;background:#9c9c9c"></div>
<div class="a" style="left:641px;top:903px;width:477.4000000000001px;height:23px;background:#fff"></div>
<div class="a" style="left:1118.4px;top:876.7px;width:87.39999999999986px;height:50px;background:#fff"></div>
<div class="a" style="left:1117.4px;top:902px;width:1.3px;height:24px;background:#a0a0a0"></div>
<div class="a" style="left:981.0px;top:877px;width:1px;height:25px;background:#d0d0d0"></div>
<div class="a" style="left:1032.9px;top:877px;width:1px;height:25px;background:#d0d0d0"></div>
<svg class="a" style="left:640.8px;top:903px" width="2" height="23"><line x1="1" y1="0" x2="1" y2="23" stroke="#111" stroke-width="1.4" stroke-dasharray="1.4 2"/></svg>
<svg class="a" style="left:694.6px;top:903px" width="2" height="23"><line x1="1" y1="0" x2="1" y2="23" stroke="#111" stroke-width="1.4" stroke-dasharray="1.4 2"/></svg>
<svg class="a" style="left:980.5px;top:903px" width="2" height="23"><line x1="1" y1="0" x2="1" y2="23" stroke="#111" stroke-width="1.4" stroke-dasharray="1.4 2"/></svg>
<svg class="a" style="left:1032.4px;top:903px" width="2" height="23"><line x1="1" y1="0" x2="1" y2="23" stroke="#111" stroke-width="1.4" stroke-dasharray="1.4 2"/></svg>
<div class="t" style="left:655.5px;top:884.69px;font-size:14.9px;color:#2e8a3a;font-weight:bold">Ид.</div>
<div class="t" style="left:703.3px;top:884.35px;font-size:15.3px;color:#707070;">Название предшественника</div>
<div class="t" style="left:988.5px;top:884.09px;font-size:15.6px;color:#707070;">Тип</div>
<div class="t" style="left:1050px;top:885.20px;font-size:14.3px;color:#707070;">Запазд.</div>
<div class="a" style="left:1205.8px;top:876.7px;width:19.600000000000136px;height:50px;background:#f0f0f0"></div>
<div class="a" style="left:1207.3px;top:900px;width:16.600000000000136px;height:27px;background:#c8c8c8"></div>
<svg class="a" style="left:1208.6px;top:884px" width="14" height="10" viewBox="0 0 14 10"><path d="M2 7.5L7 2.5L12 7.5" fill="none" stroke="#333" stroke-width="1.8"/></svg>
</body></html>
